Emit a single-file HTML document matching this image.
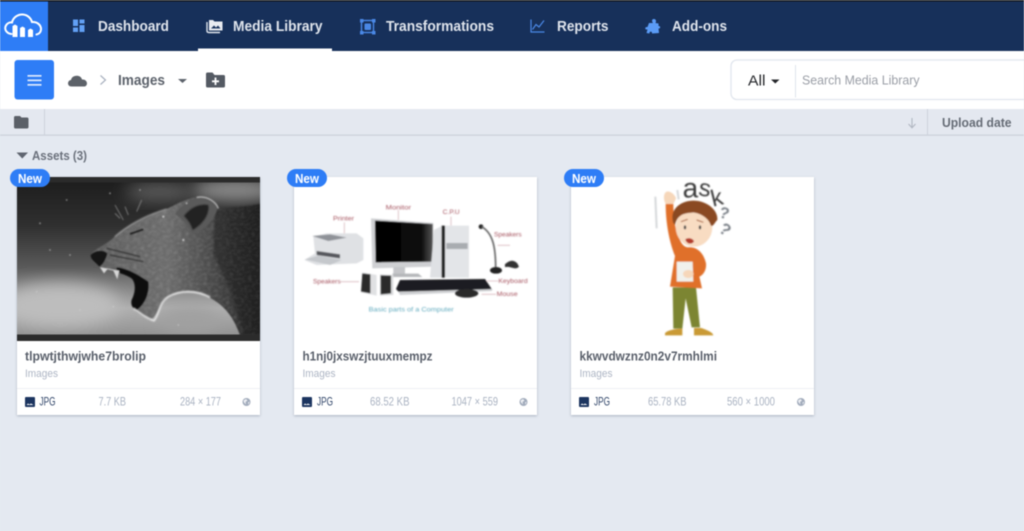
<!DOCTYPE html>
<html><head><meta charset="utf-8"><title>Media Library</title>
<style>
html,body{margin:0;padding:0;width:1024px;height:531px;overflow:hidden;background:#e4e9f1}
svg{display:block;filter:blur(.4px)}
text{font-family:"Liberation Sans",sans-serif}
.nav{fill:#dfe4ec;font-size:14.5px;font-weight:700}
.title{fill:#5a606b;font-size:12.5px;font-weight:700}
.sub{fill:#adb5c4;font-size:11px}
.jpg{fill:#2f4468;font-size:12px}
.meta{fill:#aab3c2;font-size:11.5px}
.new{fill:#fff;font-size:12.5px;font-weight:700}
.lab{fill:#a65560;font-size:18px}
</style></head><body>
<svg width="1024" height="531" viewBox="0 0 1024 531" xmlns="http://www.w3.org/2000/svg">
<defs>
<filter id="b1"><feGaussianBlur stdDeviation="1.6"/></filter>
<filter id="b2"><feGaussianBlur stdDeviation="3"/></filter>
<filter id="b8" x="-50%" y="-50%" width="200%" height="200%"><feGaussianBlur stdDeviation="8"/></filter>
<filter id="fur" x="0" y="0" width="100%" height="100%"><feTurbulence type="fractalNoise" baseFrequency=".09 .14" numOctaves="3" seed="4"/><feColorMatrix values="0 0 0 0 .7  0 0 0 0 .7  0 0 0 0 .7  1.8 0 0 0 -.75"/><feComposite in2="SourceAlpha" operator="in"/><feGaussianBlur stdDeviation="1.500"/></filter>
<filter id="sh" x="-5%" y="-5%" width="110%" height="110%"><feDropShadow dx="0" dy="1" stdDeviation="1.2" flood-color="#7a8496" flood-opacity=".55"/></filter>
<linearGradient id="lbg" x1="0" y1="0" x2="0" y2="1"><stop offset="0" stop-color="#1c1c1c"/><stop offset=".3" stop-color="#303030"/><stop offset=".55" stop-color="#5a5a5a"/><stop offset=".8" stop-color="#b0b0b0"/><stop offset="1" stop-color="#8c8c8c"/></linearGradient>
<linearGradient id="body" x1="0" y1="0" x2="1" y2="0"><stop offset="0" stop-color="#5e5e5e"/><stop offset=".45" stop-color="#6c6c6c"/><stop offset=".72" stop-color="#474747"/><stop offset="1" stop-color="#202020"/></linearGradient>
<linearGradient id="scr" x1="0" y1="0" x2="1" y2="0"><stop offset="0" stop-color="#000"/><stop offset=".8" stop-color="#0c0c0c"/><stop offset="1" stop-color="#555"/></linearGradient>
<clipPath id="lc"><rect x="17" y="177" width="243" height="164"/></clipPath>
<g id="imgicon"><rect width="10" height="10" rx="1" fill="#1c3560"/><path d="M1.500 8 L3 6.500 L4.500 7.500 L6 6.500 L8.500 8Z" fill="#fff"/></g>
<g id="globe"><circle cx="0" cy="0" r="4" fill="#a2acbc"/><path d="M-3-1.500 L-.5-3 L1-1.500 L-1 0 L-.5 2.500 L-2.500 .5Z M1.500 .5 L3.300 -.5 L2 2.800Z" fill="#eef0f4"/></g>
</defs>

<rect width="1024" height="531" fill="#e4e9f1"/>
<!-- top bar -->
<rect width="1024" height="51" fill="#17305a"/>
<rect width="1024" height="1.500" fill="#15161a"/>
<rect y="1.500" width="48" height="49.500" fill="#2e7df6"/>
<path d="M11.500 34 C6.500 33.500 4.500 29.500 5.500 26.500 C6.500 23.500 9.500 22 12 22.500 C13 17.500 18 14 23 14.500 C28 15 31 18.500 32 22 C37 21.500 41 25 41 29 C41 32 39 34 36.500 34.500" fill="none" stroke="#fff" stroke-width="2" stroke-linecap="round"/>
<path d="M12.500 26 L15 24.500 L17.500 26 V37 H12.500Z M20 28 L22.500 26.500 L25 28 V37 H20Z M28 30 L30.500 28.500 L33 30 V37 H28Z" fill="#fff"/>

<g fill="#62a0f5"><rect x="73" y="19.500" width="5" height="6.500"/><rect x="79.500" y="19.500" width="5" height="4"/><rect x="73" y="27.500" width="5" height="4.500"/><rect x="79.500" y="25" width="5" height="7"/></g>
<text class="nav" x="98" y="31" textLength="71" lengthAdjust="spacingAndGlyphs">Dashboard</text>

<path d="M207 22 V31 Q207 32.500 209 32.500 H220" fill="none" stroke="#dfe4ec" stroke-width="1.400"/>
<path d="M209 20 H213 L214.500 21.500 H222.500 V30.500 H209Z" fill="#e8ebf1"/>
<path d="M211 28.500 L214 25.500 L216 27.500 L218 25.500 L220.500 28.500Z" fill="#17305a"/>
<text class="nav" x="233" y="31" textLength="89.500" lengthAdjust="spacingAndGlyphs">Media Library</text>
<rect x="198" y="48.500" width="134" height="2.500" fill="#fff"/>

<rect x="361.500" y="20.500" width="12" height="12" fill="none" stroke="#4a88e6" stroke-width="1.400"/>
<rect x="360" y="19" width="3.500" height="3.500" fill="#4a88e6"/><rect x="372" y="19" width="3.500" height="3.500" fill="#4a88e6"/><rect x="360" y="31" width="3.500" height="3.500" fill="#4a88e6"/><rect x="372" y="31" width="3.500" height="3.500" fill="#4a88e6"/>
<rect x="364.500" y="23.500" width="6.500" height="6.500" rx="1" fill="#4a88e6"/>
<text class="nav" x="386" y="31" textLength="108" lengthAdjust="spacingAndGlyphs">Transformations</text>

<path d="M531 19.500 V32 H544.500 M532.500 29.500 L536 24.500 L539 27 L544 20.500" fill="none" stroke="#4a88e6" stroke-width="1.200"/>
<text class="nav" x="557" y="31" textLength="51.500" lengthAdjust="spacingAndGlyphs">Reports</text>

<path d="M649 23 L653 23 C651 20.500 652.500 18.800 654 19 C656 19.200 656.500 21 655.500 23 L658.500 23.500 L658.500 26 C660.500 25.500 661 28.800 658.500 28.500 L659 33 L652 33.500 C652.500 31 649 31 649.500 33.500 L646.500 33 L647.500 29.500 C644.500 30 644.500 26.500 647.500 27Z" fill="#5b9bf5"/>
<text class="nav" x="672" y="31" textLength="55" lengthAdjust="spacingAndGlyphs">Add-ons</text>

<!-- toolbar -->
<rect y="51" width="1024" height="58" fill="#fff"/>
<rect x="14.500" y="60" width="39.500" height="39.500" rx="3" fill="#2e7df6"/>
<g fill="#dfeafd"><rect x="27.500" y="75" width="14" height="1.700"/><rect x="27.500" y="79.500" width="14" height="1.700"/><rect x="27.500" y="84" width="14" height="1.700"/></g>
<path d="M71.500 86.500 C67 86.500 67 80.500 71 80 C72 74.500 81 74.500 82 79.500 C88 79 88.500 86.500 84 86.500Z" fill="#5d6269"/>
<path d="M100.500 75.500 L105.500 80 L100.500 84.500" fill="none" stroke="#a9b1bf" stroke-width="1.200"/>
<text x="118" y="85" textLength="47" lengthAdjust="spacingAndGlyphs" font-size="14.500" font-weight="700" fill="#5d636c">Images</text>
<path d="M178 79 H187 L182.500 83Z" fill="#5d636c"/>
<path d="M206 74 Q206 72.500 207.500 72.500 H212.500 L214.500 75 H223.500 Q225 75 225 76.500 V86 Q225 87.500 223.500 87.500 H207.500 Q206 87.500 206 86Z" fill="#545a63"/>
<path d="M215.500 77.500 V85 M212 81.300 H219" stroke="#fff" stroke-width="1.800"/>

<rect x="731" y="60" width="310" height="39.500" rx="6" fill="#fff" stroke="#e1e6ee" stroke-width="1.300"/>
<text x="748" y="85.500" textLength="17.500" lengthAdjust="spacingAndGlyphs" font-size="15" fill="#25272b">All</text>
<path d="M771 79.500 H779.500 L775.250 83.500Z" fill="#25272b"/>
<rect x="795" y="65" width="1" height="32.500" fill="#dfe4ec"/>
<text x="802" y="84.500" textLength="117.500" lengthAdjust="spacingAndGlyphs" font-size="13" fill="#9a9ea6">Search Media Library</text>

<!-- filter bar -->
<rect y="109" width="1024" height="26" fill="#e4e8f0"/>
<rect y="134.500" width="1024" height="1.300" fill="#cdd2db"/>
<rect x="44" y="109" width="1" height="26" fill="#cdd2db"/>
<rect x="927" y="109" width="1" height="26" fill="#cdd2db"/>
<path d="M14 117.500 Q14 116 15.500 116 H20 L21.500 117.500 H27 Q28.500 117.500 28.500 119 V127 Q28.500 128.500 27 128.500 H15.500 Q14 128.500 14 127Z" fill="#5b6068"/>
<path d="M912 118 V127.500 M908.500 124 L912 127.800 L915.500 124" fill="none" stroke="#b1b7c2" stroke-width="1.100"/>
<text x="942" y="127" textLength="69.500" lengthAdjust="spacingAndGlyphs" font-size="13" font-weight="700" fill="#666c76">Upload date</text>

<!-- assets -->
<path d="M16.500 152.500 H28 L22.250 158.500Z" fill="#5f6570"/>
<text x="32" y="160" textLength="55" lengthAdjust="spacingAndGlyphs" font-size="12.500" font-weight="700" fill="#6b717c">Assets (3)</text>

<!-- CARD 1 -->
<rect x="17" y="177" width="243" height="238" fill="#fff" filter="url(#sh)"/>
<g clip-path="url(#lc)">
<rect x="17" y="177" width="243" height="164" fill="url(#lbg)"/>
<ellipse cx="60" cy="305" rx="60" ry="22" fill="#bdbdbd" filter="url(#b8)"/>
<ellipse cx="190" cy="320" rx="30" ry="14" fill="#a0a0a0" filter="url(#b8)"/>
<ellipse cx="235" cy="190" rx="45" ry="12" fill="#8c8c8c" filter="url(#b8)"/>
<ellipse cx="160" cy="192" rx="35" ry="9" fill="#5e5e5e" filter="url(#b8)"/>
<g transform="translate(0,140) scale(.33333)" filter="url(#b1)">
 <path d="M272 345 C285 325 315 315 335 298 C370 262 430 230 500 207 C530 192 555 176 590 172 C625 165 650 190 655 205 C700 205 750 198 785 192 V585 H720 C700 530 670 485 600 460 C560 452 530 455 505 472 C480 490 475 525 450 540 C430 530 410 520 398 505 C405 470 430 450 445 425 C420 410 380 385 350 382 C335 385 310 395 298 380 C285 365 272 360 272 345Z" fill="url(#body)"/>
 <path d="M272 345 C285 325 315 315 335 298 C370 262 430 230 500 207 C530 192 555 176 590 172 C625 165 650 190 655 205 C700 205 750 198 785 192 V585 H720 C700 530 670 485 600 460 C560 452 530 455 505 472 C480 490 475 525 450 540 C430 530 410 520 398 505 C405 470 430 450 445 425 C420 410 380 385 350 382 C335 385 310 395 298 380 C285 365 272 360 272 345Z" filter="url(#fur)" opacity=".28"/>
 <path d="M650 205 C700 205 750 198 785 192 V585 H730 C715 500 680 420 640 350 C640 290 640 240 650 205Z" fill="#1e1e1e" opacity=".45" filter="url(#b2)"/>
 <path d="M525 222 C550 190 580 172 610 172 C635 172 652 190 652 207 C640 245 610 275 575 282 C565 255 545 235 525 222Z" fill="#5a5a5a"/>
 <path d="M552 228 C570 205 595 190 625 195 C630 225 605 255 578 270 C572 250 562 238 552 228Z" fill="#232323" filter="url(#b1)"/>
 <path d="M590 172 C625 165 650 190 655 205" fill="none" stroke="#b0b0b0" stroke-width="4"/>
 <path d="M350 382 C385 385 420 408 445 425 C450 455 435 495 410 510 C395 505 392 490 395 480 C410 450 405 425 395 415 C380 405 360 400 350 395Z" fill="#070707"/>
 <path d="M272 345 C285 330 310 328 322 340 C318 360 305 378 298 380 C285 365 272 360 272 345Z" fill="#151515"/>
 <path d="M300 382 L312 400 L322 388 L340 392 L352 418 L358 392Z" fill="#d8d8d8"/>
 <path d="M400 505 C420 520 440 535 462 542 C480 520 475 490 505 470 C540 450 590 450 630 472" fill="none" stroke="#ececec" stroke-width="5" filter="url(#b1)"/>
 <path d="M370 240 L345 195 M360 235 L345 220 M385 225 L375 200 M410 215 L425 180" stroke="#9a9a9a" stroke-width="2" fill="none"/>
 <path d="M390 282 L430 268" stroke="#1c1c1c" stroke-width="6"/>
 <path d="M320 325 L420 350 M330 345 L430 365" stroke="#2b2b2b" stroke-width="5" opacity=".7" fill="none"/>
 <path d="M500 207 C440 225 390 250 345 290" fill="none" stroke="#a8a8a8" stroke-width="3" filter="url(#b1)"/>
 <g fill="#d0d0d0"><circle cx="120" cy="250" r="2"/><circle cx="200" cy="180" r="2"/><circle cx="330" cy="160" r="2"/><circle cx="420" cy="150" r="2"/><circle cx="210" cy="345" r="2"/><circle cx="110" cy="455" r="2"/><circle cx="240" cy="510" r="2"/><circle cx="560" cy="190" r="2"/><circle cx="340" cy="500" r="2"/><circle cx="550" cy="300" r="3"/><circle cx="490" cy="230" r="3"/><circle cx="150" cy="330" r="2"/><circle cx="535" cy="555" r="2"/></g>
</g>
<rect x="17" y="177" width="243" height="5.500" fill="#2b2b2b"/>
<rect x="17" y="334.500" width="243" height="6.500" fill="#2b2b2b"/>
</g>
<rect x="17" y="388" width="243" height="1" fill="#eef0f4"/>
<text class="title" x="25" y="360.500" textLength="121" lengthAdjust="spacingAndGlyphs">tlpwtjthwjwhe7brolip</text>
<text class="sub" x="25" y="377" textLength="33" lengthAdjust="spacingAndGlyphs">Images</text>
<use href="#imgicon" x="25" y="397"/>
<text class="jpg" x="39.500" y="405.500" textLength="16" lengthAdjust="spacingAndGlyphs">JPG</text>
<text class="meta" x="98.500" y="405.500" textLength="27.500" lengthAdjust="spacingAndGlyphs">7.7 KB</text>
<text class="meta" x="180" y="405.500" textLength="41" lengthAdjust="spacingAndGlyphs">284 × 177</text>
<use href="#globe" x="246.500" y="402"/>
<rect x="10" y="169" width="40" height="18" rx="9" fill="#2e7df6"/>
<text class="new" x="18" y="183" textLength="24" lengthAdjust="spacingAndGlyphs">New</text>

<!-- CARD 2 -->
<rect x="294" y="177" width="243" height="238" fill="#fff" filter="url(#sh)"/>
<g transform="translate(285,165) scale(.33333)" filter="url(#b1)">
 <!-- printer -->
 <path d="M85 215 L125 205 H215 L235 220 V285 L215 295 L95 300 L58 285 L90 265Z" fill="#dfe1e4"/>
 <path d="M82 213 L130 228 L185 218 L135 208Z" fill="#8f9298"/>
 <path d="M95 258 L165 268 V280 L95 270Z" fill="#55575b"/>
 <path d="M60 283 L100 272 L170 285 L135 300Z" fill="#c5c8cc"/>
 <!-- monitor -->
 <path d="M258 160 L445 174 V305 L262 310Z" fill="#cfd0d3"/>
 <path d="M270 167 L443 177 V290 L272 292Z" fill="url(#scr)"/>
 <rect x="325" y="306" width="35" height="22" fill="#c5c6c9"/>
 <path d="M322 326 H400 L412 336 H325Z" fill="#b5b7ba"/>
 <!-- tower -->
 <path d="M447 195 L472 182 V338 H435Z" fill="#dfe1e4"/>
 <rect x="470" y="182" width="10" height="156" fill="#1a1a1c"/>
 <rect x="480" y="182" width="72" height="156" fill="#e3e5e8"/>
 <rect x="484" y="234" width="64" height="18" fill="#a9acb0"/>
 <!-- mic -->
 <circle cx="588" cy="185" r="7" fill="#222"/>
 <path d="M590 185 C625 205 632 250 632 310" fill="none" stroke="#666" stroke-width="5"/>
 <ellipse cx="633" cy="316" rx="18" ry="10" fill="#222"/>
 <path d="M660 300 C680 280 695 290 700 305 C690 315 675 300 660 305" fill="#333" stroke="#333" stroke-width="3"/>
 <!-- speakers -->
 <path d="M232 322 L275 330 V392 L228 382Z" fill="#e0e1e3"/>
 <path d="M232 325 L256 328 V385 L228 380Z" fill="#2a2a2c"/>
 <path d="M285 328 L325 330 V390 L285 392Z" fill="#dadbdd"/>
 <path d="M287 331 L318 332 V385 L287 388Z" fill="#2a2a2c"/>
 <!-- keyboard -->
 <path d="M345 345 L600 342 L622 375 L345 385 L333 372Z" fill="#1d1d20"/>
 <path d="M340 380 L622 372 L620 378 L345 390Z" fill="#cfd0d3"/>
 <ellipse cx="545" cy="385" rx="35" ry="13" fill="#2a2a2c"/>
 <!-- labels -->
 <g fill="none" stroke="#d9b9bd" stroke-width="2.500"><path d="M340 135 V165 M178 172 V205 M498 155 V182 M638 241 H675 M165 350 H222 M605 348 H640 M590 388 H633"/></g>
 <text class="lab" x="302" y="133" textLength="76" lengthAdjust="spacingAndGlyphs">Monitor</text>
 <text class="lab" x="144" y="167" textLength="63" lengthAdjust="spacingAndGlyphs">Printer</text>
 <text class="lab" x="473" y="147" textLength="51" lengthAdjust="spacingAndGlyphs">C.P.U</text>
 <text class="lab" x="627" y="215" textLength="83" lengthAdjust="spacingAndGlyphs">Speakers</text>
 <text class="lab" x="84" y="356" textLength="83" lengthAdjust="spacingAndGlyphs">Speakers</text>
 <text class="lab" x="640" y="354" textLength="88" lengthAdjust="spacingAndGlyphs">Keyboard</text>
 <text class="lab" x="635" y="393" textLength="63" lengthAdjust="spacingAndGlyphs">Mouse</text>
 <text x="251" y="440" textLength="255" lengthAdjust="spacingAndGlyphs" font-size="19" fill="#5fa9bd">Basic parts of a Computer</text>
</g>
<rect x="294" y="388" width="243" height="1" fill="#eef0f4"/>
<text class="title" x="302.500" y="360.500" textLength="130" lengthAdjust="spacingAndGlyphs">h1nj0jxswzjtuuxmempz</text>
<text class="sub" x="302.500" y="377" textLength="33" lengthAdjust="spacingAndGlyphs">Images</text>
<use href="#imgicon" x="302" y="397"/>
<text class="jpg" x="317" y="405.500" textLength="16" lengthAdjust="spacingAndGlyphs">JPG</text>
<text class="meta" x="370" y="405.500" textLength="39.500" lengthAdjust="spacingAndGlyphs">68.52 KB</text>
<text class="meta" x="451.500" y="405.500" textLength="46.500" lengthAdjust="spacingAndGlyphs">1047 × 559</text>
<use href="#globe" x="523.500" y="402"/>
<rect x="287" y="169" width="40" height="18" rx="9" fill="#2e7df6"/>
<text class="new" x="295" y="183" textLength="24" lengthAdjust="spacingAndGlyphs">New</text>

<!-- CARD 3 -->
<rect x="571" y="177" width="243" height="238" fill="#fff" filter="url(#sh)"/>
<g transform="translate(620,170) scale(.33333)" filter="url(#b1)">
 <!-- legs -->
 <path d="M158 352 L228 352 L240 472 H215 L197 385 L187 476 H160Z" fill="#7c8530"/>
 <path d="M135 490 C140 482 165 476 187 476 V496 H135Z M222 474 H244 C260 480 278 486 280 496 H222Z" fill="#c99a35"/>
 <!-- body -->
 <path d="M137 100 L160 100 C160 140 165 180 178 205 C185 225 195 232 205 232 C228 230 250 245 258 280 C260 300 250 315 238 320 L246 355 L150 350 L165 258 C150 220 137 165 137 100Z" fill="#e0702c"/>
 <path d="M170 275 H218 L220 335 H170Z" fill="#f1f1ec"/>
 <ellipse cx="205" cy="312" rx="16" ry="12" fill="#f6d7ba"/>
 <!-- hand -->
 <path d="M137 102 C128 85 132 68 140 65 C152 62 165 75 168 85 L160 102Z" fill="#f6d7ba"/>
 <!-- head -->
 <ellipse cx="222" cy="172" rx="55" ry="58" fill="#f8dcc2"/>
 <path d="M158 150 C152 115 185 92 220 92 C260 92 295 120 292 150 C285 155 278 175 272 165 C265 140 230 125 215 128 C190 130 172 135 165 165 C160 160 158 155 158 150Z" fill="#8a4a24"/>
 <path d="M196 208 C205 202 218 205 222 214 C215 225 200 222 196 208Z" fill="#b23a2a"/>
 <g fill="#444"><ellipse cx="195" cy="172" rx="3.500" ry="6"/><ellipse cx="240" cy="172" rx="3.500" ry="6"/></g>
 <path d="M183 155 L203 148 M230 150 L250 157" stroke="#a0532a" stroke-width="3"/>
 <!-- motion -->
 <path d="M106 80 L110 175 M172 60 L176 88" stroke="#d5d8da" stroke-width="6" fill="none"/>
 <!-- text -->
 <text x="188" y="82" font-size="84" fill="#3a3a3a">a</text>
 <text x="236" y="78" font-size="72" fill="#3a3a3a" transform="rotate(8 250 60)">s</text>
 <text x="272" y="108" font-size="70" fill="#3a3a3a" transform="rotate(-14 285 80)">k</text>
 <text x="298" y="145" font-size="48" font-weight="700" fill="#7b8188" transform="rotate(15 312 130)">?</text>
 <text x="300" y="198" font-size="50" font-weight="700" fill="#7b8188" transform="rotate(35 320 180)">?</text>
</g>
<rect x="571" y="388" width="243" height="1" fill="#eef0f4"/>
<text class="title" x="579.500" y="360.500" textLength="137.500" lengthAdjust="spacingAndGlyphs">kkwvdwznz0n2v7rmhlmi</text>
<text class="sub" x="579.500" y="377" textLength="33" lengthAdjust="spacingAndGlyphs">Images</text>
<use href="#imgicon" x="579" y="397"/>
<text class="jpg" x="594" y="405.500" textLength="16" lengthAdjust="spacingAndGlyphs">JPG</text>
<text class="meta" x="648" y="405.500" textLength="38.500" lengthAdjust="spacingAndGlyphs">65.78 KB</text>
<text class="meta" x="727" y="405.500" textLength="48" lengthAdjust="spacingAndGlyphs">560 × 1000</text>
<use href="#globe" x="801" y="402"/>
<rect x="564" y="169" width="40" height="18" rx="9" fill="#2e7df6"/>
<text class="new" x="572" y="183" textLength="24" lengthAdjust="spacingAndGlyphs">New</text>
</svg>
</body></html>
